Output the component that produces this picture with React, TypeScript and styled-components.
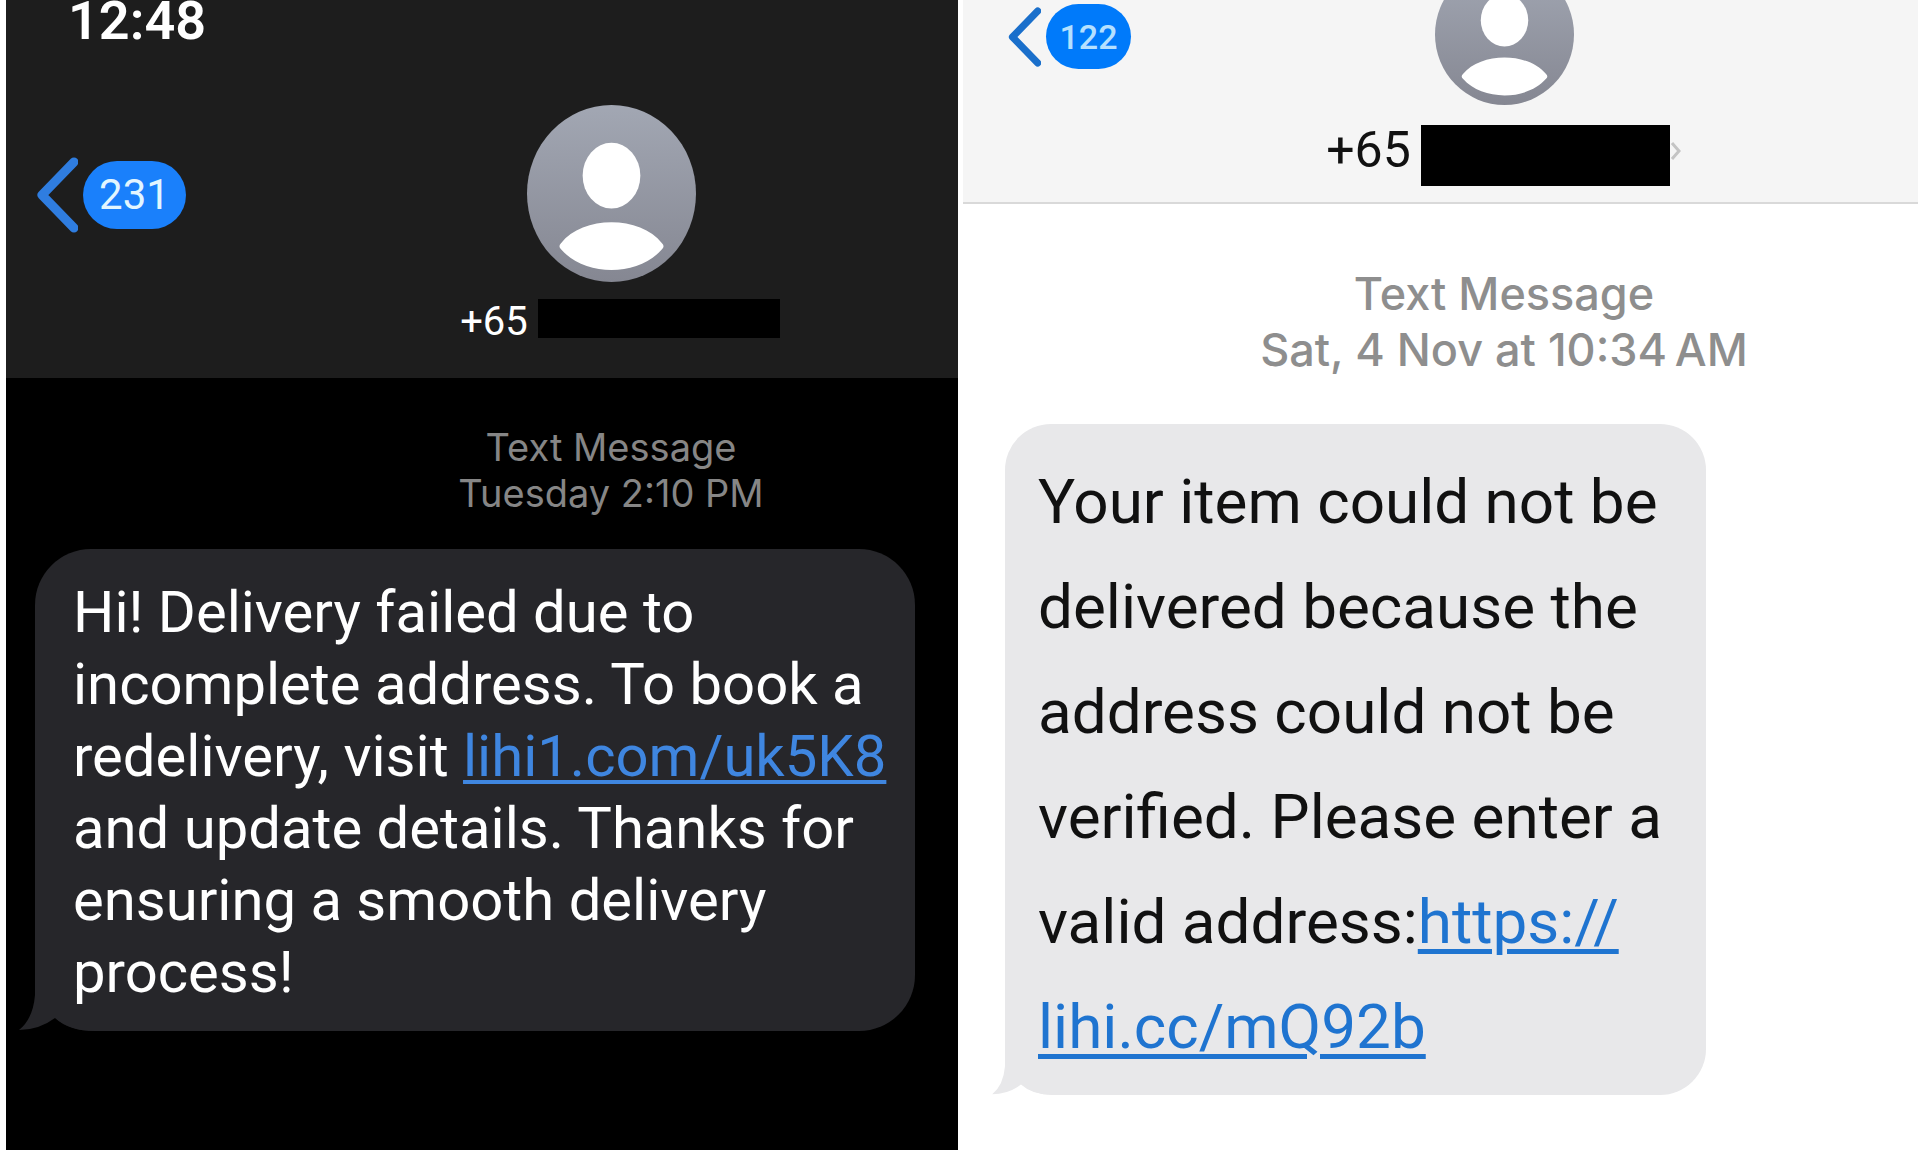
import React from "react";
import styled, { createGlobalStyle, css } from "styled-components";

type Tone = "dark" | "light";

const GlobalStyle = createGlobalStyle`
  *, *::before, *::after { box-sizing: border-box; }
  body { margin: 0; background: #ffffff; }
`;

const sans = `Roboto, "Liberation Sans", sans-serif`;
const metaSans = `Inter, Roboto, sans-serif`;

const Page = styled.main`
  display: grid;
  grid-template-columns: 952fr 955fr;
  gap: 5px;
  min-height: 100vh;
  padding: 0 2px 0 6px;
  font-family: ${sans};
`;

const Screen = styled.section<{ $tone: Tone }>`
  display: flex;
  flex-direction: column;
  min-width: 0;
  overflow: hidden;
  background: ${(p) => (p.$tone === "dark" ? "#000000" : "#ffffff")};
`;

const StatusBar = styled.div`
  padding: 0 62px 63px;
  background: #1d1d1d;
  color: #ffffff;
  font-size: 54px;
  font-weight: 600;
  line-height: 42px;
`;

const Header = styled.header<{ $tone: Tone }>`
  display: flex;
  align-items: flex-start;
  ${(p) =>
    p.$tone === "dark"
      ? css`
          padding-bottom: 34px;
          background: #1d1d1d;
          color: #ffffff;
        `
      : css`
          margin-top: -36px;
          padding-bottom: 16px;
          border-bottom: 2px solid #d9d9d9;
          background: #f5f5f5;
          color: #111111;
        `}
`;

const BackButton = styled.button<{ $tone: Tone }>`
  display: flex;
  flex: none;
  align-items: center;
  gap: 5px;
  width: ${(p) => (p.$tone === "dark" ? 258 : 127)}px;
  height: ${(p) => (p.$tone === "dark" ? 179 : 145)}px;
  padding: 0 0 0 ${(p) => (p.$tone === "dark" ? 28 : 43)}px;
  border: 0;
  background: none;
  font-family: inherit;
  cursor: pointer;

  svg {
    flex: none;
    width: ${(p) => (p.$tone === "dark" ? 44 : 35)}px;
    height: ${(p) => (p.$tone === "dark" ? 76 : 60)}px;
  }
`;

const Unread = styled.span<{ $tone: Tone }>`
  display: flex;
  flex: none;
  align-items: center;
  justify-content: center;
  width: ${(p) => (p.$tone === "dark" ? 103 : 85)}px;
  height: ${(p) => (p.$tone === "dark" ? 68 : 65)}px;
  border-radius: 34px;
  background: ${(p) => (p.$tone === "dark" ? "#1a80fb" : "#007afa")};
  color: ${(p) => (p.$tone === "dark" ? "#e2f6ff" : "#b5e0ff")};
  font-size: ${(p) => (p.$tone === "dark" ? 42 : 34)}px;
  font-weight: ${(p) => (p.$tone === "dark" ? 400 : 500)};
`;

const Contact = styled.div<{ $tone: Tone }>`
  display: flex;
  flex: 1;
  flex-direction: column;
  align-items: center;
  gap: ${(p) => (p.$tone === "dark" ? 17 : 20)}px;

  > svg {
    display: block;
    width: ${(p) => (p.$tone === "dark" ? 169 : 139)}px;
    height: ${(p) => (p.$tone === "dark" ? 177 : 141)}px;
  }
`;

const Phone = styled.div<{ $tone: Tone }>`
  display: flex;
  align-items: flex-start;
  gap: 10px;
  padding-left: ${(p) => (p.$tone === "dark" ? 18 : 0)}px;
  font-size: ${(p) => (p.$tone === "dark" ? 40 : 50)}px;
  line-height: ${(p) => (p.$tone === "dark" ? 45 : 50)}px;
`;

const Redacted = styled.span<{ $tone: Tone }>`
  width: ${(p) => (p.$tone === "dark" ? 242 : 249)}px;
  height: ${(p) => (p.$tone === "dark" ? 39 : 61)}px;
  background: #000000;
`;

const PhoneEnd = styled.span`
  display: flex;
  align-items: center;
  height: 52px;
  margin-left: -10px;

  svg {
    width: 12px;
    height: 22px;
  }
`;

const Thread = styled.div<{ $tone: Tone }>`
  display: flex;
  flex-direction: column;
  gap: ${(p) => (p.$tone === "dark" ? 33 : 46)}px;
  padding: ${(p) => (p.$tone === "dark" ? "46px 43px 40px 29px" : "62px 42px 40px")};
`;

const Meta = styled.p<{ $tone: Tone }>`
  margin: 0;
  padding-left: ${(p) => (p.$tone === "dark" ? 272 : 127)}px;
  color: ${(p) => (p.$tone === "dark" ? "#868686" : "#8e8e8e")};
  font-family: ${metaSans};
  font-size: ${(p) => (p.$tone === "dark" ? 38 : 45)}px;
  font-weight: ${(p) => (p.$tone === "dark" ? 400 : 500)};
  line-height: ${(p) => (p.$tone === "dark" ? 46 : 56)}px;
  text-align: center;
`;

const Bubble = styled.div<{ $tone: Tone }>`
  position: relative;
  ${(p) =>
    p.$tone === "dark"
      ? css`
          max-width: 880px;
          padding: 27px 20px 23px 38px;
          border-radius: 56px;
          background: #26262a;
          color: #ffffff;
          font-size: 58px;
          line-height: 72px;
        `
      : css`
          max-width: 701px;
          padding: 25px 33px 16px;
          border-radius: 46px;
          background: #e8e8ea;
          color: #111111;
          font-size: 62px;
          line-height: 105px;
        `}
`;

const MessageText = styled.p`
  position: relative;
  margin: 0;
`;

const Tail = styled.svg<{ $tone: Tone }>`
  position: absolute;
  bottom: 0;
  left: ${(p) => (p.$tone === "dark" ? -20 : -16)}px;
  width: ${(p) => (p.$tone === "dark" ? 80 : 64)}px;
  height: ${(p) => (p.$tone === "dark" ? 70 : 56)}px;
`;

const MessageLink = styled.a<{ $tone: Tone }>`
  color: ${(p) => (p.$tone === "dark" ? "#3f86e0" : "#1f74d0")};
  text-decoration: underline;
  text-decoration-thickness: ${(p) => (p.$tone === "dark" ? 4 : 5)}px;
  text-underline-offset: ${(p) => (p.$tone === "dark" ? 4 : 6)}px;
`;

function BackChevron({ color }: { color: string }) {
  return (
    <svg viewBox="0 0 44 76" fill="none" aria-hidden="true">
      <path d="M40 5 L8 38 L40 71" stroke={color} strokeWidth="9" strokeLinecap="round" strokeLinejoin="round" />
    </svg>
  );
}

function Avatar({ id }: { id: string }) {
  return (
    <svg viewBox="0 0 164 178" preserveAspectRatio="none" role="img" aria-label="Contact">
      <defs>
        <linearGradient id={id} x1="0" y1="0" x2="0" y2="1">
          <stop offset="0" stopColor="#a2a7b3" />
          <stop offset="1" stopColor="#858792" />
        </linearGradient>
      </defs>
      <ellipse cx="82" cy="89" rx="82" ry="89" fill={`url(#${id})`} />
      <ellipse cx="82" cy="71" rx="28" ry="33" fill="#ffffff" />
      <path d="M33 139 C54 111 110 111 131 139 Q134 142 131 145 C108 173 56 173 33 145 Q30 142 33 139 Z" fill="#ffffff" />
    </svg>
  );
}

function BubbleTail({ tone }: { tone: Tone }) {
  const page = tone === "dark" ? "#000000" : "#ffffff";
  const fill = tone === "dark" ? "#26262a" : "#e8e8ea";
  return (
    <Tail $tone={tone} viewBox="0 0 80 70" aria-hidden="true">
      <path d="M0 70 L40 57 Q54 70 80 70 Z" fill={page} />
      <path d="M20 0 V34 Q18 58 4 69 Q24 69 40 57 Q54 70 80 70 V0 Z" fill={fill} />
    </Tail>
  );
}

export default function App() {
  return (
    <>
      <GlobalStyle />
      <Page>
        <Screen $tone="dark">
          <StatusBar>12:48</StatusBar>
          <Header $tone="dark">
            <BackButton $tone="dark" type="button">
              <BackChevron color="#2f7de0" />
              <Unread $tone="dark">231</Unread>
            </BackButton>
            <Contact $tone="dark">
              <Avatar id="avatar-dark" />
              <Phone $tone="dark">
                +65
                <Redacted $tone="dark" />
              </Phone>
            </Contact>
          </Header>
          <Thread $tone="dark">
            <Meta $tone="dark">
              Text Message
              <br />
              Tuesday 2:10 PM
            </Meta>
            <Bubble $tone="dark">
              <BubbleTail tone="dark" />
              <MessageText>
                Hi! Delivery failed due to incomplete address. To book a redelivery, visit{" "}
                <MessageLink $tone="dark" href="#redelivery">
                  lihi1.com/uk5K8
                </MessageLink>{" "}
                and update details. Thanks for ensuring a smooth delivery process!
              </MessageText>
            </Bubble>
          </Thread>
        </Screen>

        <Screen $tone="light">
          <Header $tone="light">
            <BackButton $tone="light" type="button">
              <BackChevron color="#1a6fcb" />
              <Unread $tone="light">122</Unread>
            </BackButton>
            <Contact $tone="light">
              <Avatar id="avatar-light" />
              <Phone $tone="light">
                +65
                <Redacted $tone="light" />
                <PhoneEnd>
                  <svg viewBox="0 0 12 22" fill="none" aria-hidden="true">
                    <path d="M2 3 L9 11 L2 19" stroke="#c4c4c4" strokeWidth="3" />
                  </svg>
                </PhoneEnd>
              </Phone>
            </Contact>
          </Header>
          <Thread $tone="light">
            <Meta $tone="light">
              Text Message
              <br />
              Sat, 4 Nov at 10:34{"\u202f"}AM
            </Meta>
            <Bubble $tone="light">
              <BubbleTail tone="light" />
              <MessageText>
                Your item could not be delivered because the address could not be verified. Please enter a valid
                address:
                <MessageLink $tone="light" href="#verify">
                  https://
                  <wbr />
                  lihi.cc/mQ92b
                </MessageLink>
              </MessageText>
            </Bubble>
          </Thread>
        </Screen>
      </Page>
    </>
  );
}
